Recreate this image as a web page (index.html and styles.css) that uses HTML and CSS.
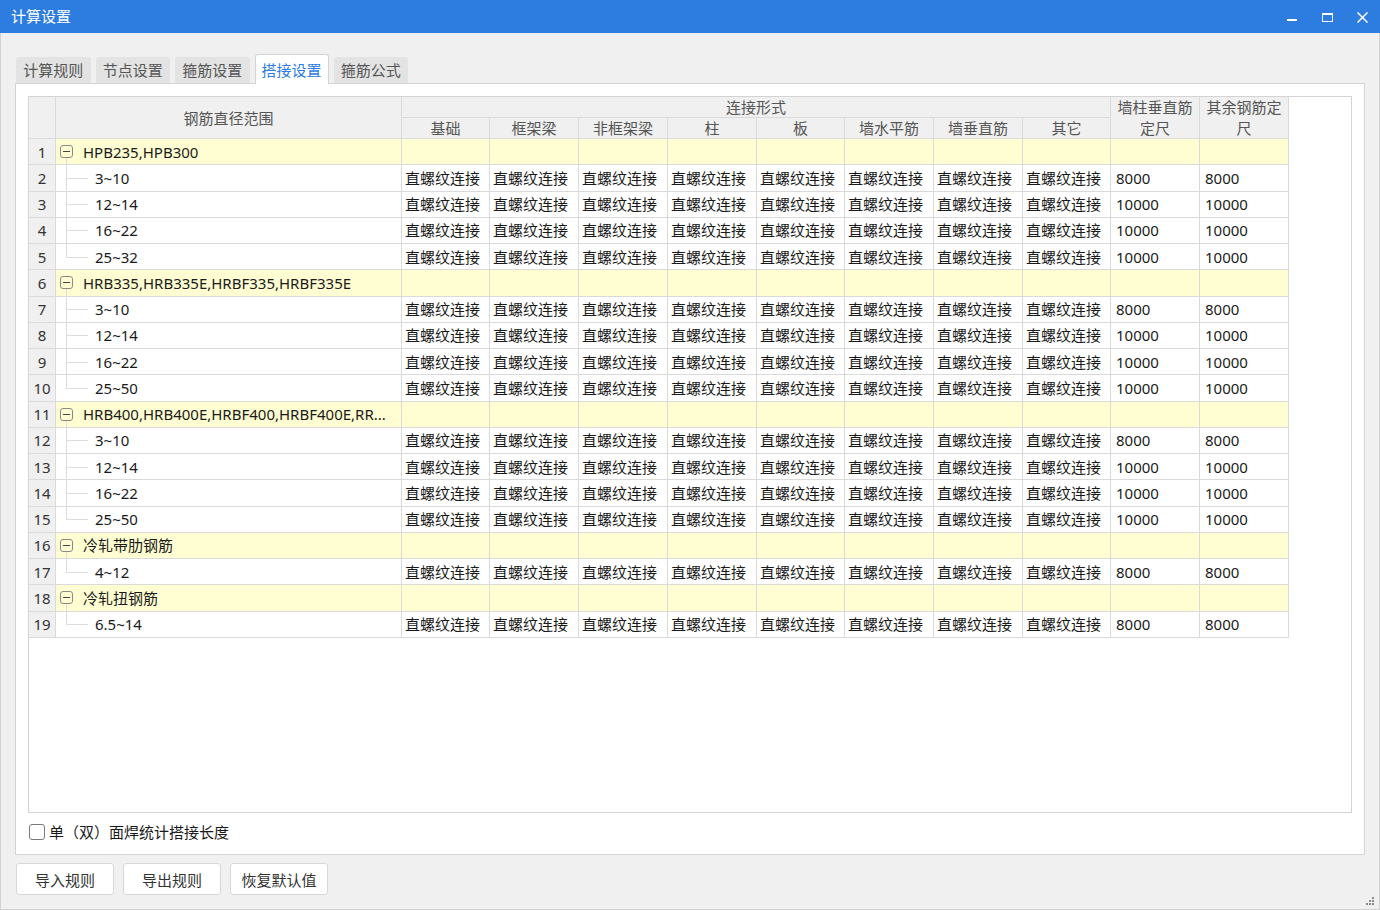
FILE: index.html
```html
<!DOCTYPE html>
<html lang="zh-CN">
<head>
<meta charset="utf-8">
<title>计算设置</title>
<link rel="stylesheet" href="styles.css">
</head>
<body>
<div class="window">
  <div class="titlebar">
    <span class="title">计算设置</span>
    <div class="controls">
      <div class="ctl"><svg width="11" height="11" viewBox="0 0 11 11"><rect x="0" y="7" width="10" height="2" fill="#fff"/></svg></div>
      <div class="ctl"><svg width="11" height="11" viewBox="0 0 11 11"><rect x="0.5" y="1.5" width="10" height="8" fill="none" stroke="#fff" stroke-width="1"/><rect x="0" y="1" width="11" height="2" fill="#fff"/></svg></div>
      <div class="ctl"><svg width="11" height="11" viewBox="0 0 11 11"><path d="M0.5 0.5 L10.5 10.5 M10.5 0.5 L0.5 10.5" stroke="#fff" stroke-width="1.5"/></svg></div>
    </div>
  </div>
  <div class="main">
    <div class="tabs">
      <div class="tab">计算规则</div>
      <div class="tab">节点设置</div>
      <div class="tab">箍筋设置</div>
      <div class="tab active">搭接设置</div>
      <div class="tab">箍筋公式</div>
    </div>
    <div class="panel">
      <div class="gridbox">
        <div class="grid">
          <div class="h hn"></div>
          <div class="h ht">钢筋直径范围</div>
          <div class="h hg">连接形式</div>
          <div class="h hw">墙柱垂直筋定尺</div>
          <div class="h hw">其余钢筋定尺</div>
          <div class="h">基础</div>
          <div class="h">框架梁</div>
          <div class="h">非框架梁</div>
          <div class="h">柱</div>
          <div class="h">板</div>
          <div class="h">墙水平筋</div>
          <div class="h">墙垂直筋</div>
          <div class="h">其它</div>

          <div class="n">1</div><div class="t gp"><span class="box"></span>HPB235,HPB300</div><div class="c y"></div><div class="c y"></div><div class="c y"></div><div class="c y"></div><div class="c y"></div><div class="c y"></div><div class="c y"></div><div class="c y"></div><div class="c y"></div><div class="c y"></div>
          <div class="n">2</div><div class="t ch">3~10</div><div class="c">直螺纹连接</div><div class="c">直螺纹连接</div><div class="c">直螺纹连接</div><div class="c">直螺纹连接</div><div class="c">直螺纹连接</div><div class="c">直螺纹连接</div><div class="c">直螺纹连接</div><div class="c">直螺纹连接</div><div class="c v">8000</div><div class="c v">8000</div>
          <div class="n">3</div><div class="t ch">12~14</div><div class="c">直螺纹连接</div><div class="c">直螺纹连接</div><div class="c">直螺纹连接</div><div class="c">直螺纹连接</div><div class="c">直螺纹连接</div><div class="c">直螺纹连接</div><div class="c">直螺纹连接</div><div class="c">直螺纹连接</div><div class="c v">10000</div><div class="c v">10000</div>
          <div class="n">4</div><div class="t ch">16~22</div><div class="c">直螺纹连接</div><div class="c">直螺纹连接</div><div class="c">直螺纹连接</div><div class="c">直螺纹连接</div><div class="c">直螺纹连接</div><div class="c">直螺纹连接</div><div class="c">直螺纹连接</div><div class="c">直螺纹连接</div><div class="c v">10000</div><div class="c v">10000</div>
          <div class="n">5</div><div class="t ch last">25~32</div><div class="c">直螺纹连接</div><div class="c">直螺纹连接</div><div class="c">直螺纹连接</div><div class="c">直螺纹连接</div><div class="c">直螺纹连接</div><div class="c">直螺纹连接</div><div class="c">直螺纹连接</div><div class="c">直螺纹连接</div><div class="c v">10000</div><div class="c v">10000</div>

          <div class="n">6</div><div class="t gp"><span class="box"></span>HRB335,HRB335E,HRBF335,HRBF335E</div><div class="c y"></div><div class="c y"></div><div class="c y"></div><div class="c y"></div><div class="c y"></div><div class="c y"></div><div class="c y"></div><div class="c y"></div><div class="c y"></div><div class="c y"></div>
          <div class="n">7</div><div class="t ch">3~10</div><div class="c">直螺纹连接</div><div class="c">直螺纹连接</div><div class="c">直螺纹连接</div><div class="c">直螺纹连接</div><div class="c">直螺纹连接</div><div class="c">直螺纹连接</div><div class="c">直螺纹连接</div><div class="c">直螺纹连接</div><div class="c v">8000</div><div class="c v">8000</div>
          <div class="n">8</div><div class="t ch">12~14</div><div class="c">直螺纹连接</div><div class="c">直螺纹连接</div><div class="c">直螺纹连接</div><div class="c">直螺纹连接</div><div class="c">直螺纹连接</div><div class="c">直螺纹连接</div><div class="c">直螺纹连接</div><div class="c">直螺纹连接</div><div class="c v">10000</div><div class="c v">10000</div>
          <div class="n">9</div><div class="t ch">16~22</div><div class="c">直螺纹连接</div><div class="c">直螺纹连接</div><div class="c">直螺纹连接</div><div class="c">直螺纹连接</div><div class="c">直螺纹连接</div><div class="c">直螺纹连接</div><div class="c">直螺纹连接</div><div class="c">直螺纹连接</div><div class="c v">10000</div><div class="c v">10000</div>
          <div class="n">10</div><div class="t ch last">25~50</div><div class="c">直螺纹连接</div><div class="c">直螺纹连接</div><div class="c">直螺纹连接</div><div class="c">直螺纹连接</div><div class="c">直螺纹连接</div><div class="c">直螺纹连接</div><div class="c">直螺纹连接</div><div class="c">直螺纹连接</div><div class="c v">10000</div><div class="c v">10000</div>

          <div class="n">11</div><div class="t gp"><span class="box"></span>HRB400,HRB400E,HRBF400,HRBF400E,RR...</div><div class="c y"></div><div class="c y"></div><div class="c y"></div><div class="c y"></div><div class="c y"></div><div class="c y"></div><div class="c y"></div><div class="c y"></div><div class="c y"></div><div class="c y"></div>
          <div class="n">12</div><div class="t ch">3~10</div><div class="c">直螺纹连接</div><div class="c">直螺纹连接</div><div class="c">直螺纹连接</div><div class="c">直螺纹连接</div><div class="c">直螺纹连接</div><div class="c">直螺纹连接</div><div class="c">直螺纹连接</div><div class="c">直螺纹连接</div><div class="c v">8000</div><div class="c v">8000</div>
          <div class="n">13</div><div class="t ch">12~14</div><div class="c">直螺纹连接</div><div class="c">直螺纹连接</div><div class="c">直螺纹连接</div><div class="c">直螺纹连接</div><div class="c">直螺纹连接</div><div class="c">直螺纹连接</div><div class="c">直螺纹连接</div><div class="c">直螺纹连接</div><div class="c v">10000</div><div class="c v">10000</div>
          <div class="n">14</div><div class="t ch">16~22</div><div class="c">直螺纹连接</div><div class="c">直螺纹连接</div><div class="c">直螺纹连接</div><div class="c">直螺纹连接</div><div class="c">直螺纹连接</div><div class="c">直螺纹连接</div><div class="c">直螺纹连接</div><div class="c">直螺纹连接</div><div class="c v">10000</div><div class="c v">10000</div>
          <div class="n">15</div><div class="t ch last">25~50</div><div class="c">直螺纹连接</div><div class="c">直螺纹连接</div><div class="c">直螺纹连接</div><div class="c">直螺纹连接</div><div class="c">直螺纹连接</div><div class="c">直螺纹连接</div><div class="c">直螺纹连接</div><div class="c">直螺纹连接</div><div class="c v">10000</div><div class="c v">10000</div>

          <div class="n">16</div><div class="t gp"><span class="box"></span>冷轧带肋钢筋</div><div class="c y"></div><div class="c y"></div><div class="c y"></div><div class="c y"></div><div class="c y"></div><div class="c y"></div><div class="c y"></div><div class="c y"></div><div class="c y"></div><div class="c y"></div>
          <div class="n">17</div><div class="t ch last">4~12</div><div class="c">直螺纹连接</div><div class="c">直螺纹连接</div><div class="c">直螺纹连接</div><div class="c">直螺纹连接</div><div class="c">直螺纹连接</div><div class="c">直螺纹连接</div><div class="c">直螺纹连接</div><div class="c">直螺纹连接</div><div class="c v">8000</div><div class="c v">8000</div>

          <div class="n">18</div><div class="t gp"><span class="box"></span>冷轧扭钢筋</div><div class="c y"></div><div class="c y"></div><div class="c y"></div><div class="c y"></div><div class="c y"></div><div class="c y"></div><div class="c y"></div><div class="c y"></div><div class="c y"></div><div class="c y"></div>
          <div class="n">19</div><div class="t ch last">6.5~14</div><div class="c">直螺纹连接</div><div class="c">直螺纹连接</div><div class="c">直螺纹连接</div><div class="c">直螺纹连接</div><div class="c">直螺纹连接</div><div class="c">直螺纹连接</div><div class="c">直螺纹连接</div><div class="c">直螺纹连接</div><div class="c v">8000</div><div class="c v">8000</div>
        </div>
      </div>
      <label class="checkrow"><span class="checkbox"></span>单（双）面焊统计搭接长度</label>
    </div>
    <div class="footer">
      <button class="btn">导入规则</button>
      <button class="btn">导出规则</button>
      <button class="btn">恢复默认值</button>
      <svg class="grip" width="8" height="8" viewBox="0 0 8 8"><g fill="#8a8a8a"><rect x="6" y="0" width="2" height="2"/><rect x="3" y="3" width="2" height="2"/><rect x="6" y="3" width="2" height="2"/><rect x="0" y="6" width="2" height="2"/><rect x="3" y="6" width="2" height="2"/><rect x="6" y="6" width="2" height="2"/></g></svg>
    </div>
  </div>
</div>
</body>
</html>
```

FILE: styles.css
```css
html, body {
  margin: 0;
  padding: 0;
}
body {
  font-family: "Noto Sans", "Noto Sans CJK SC", sans-serif;
  font-size: 15px;
  color: #1a1a1a;
  background: #f0f0f0;
}
.window {
  width: 1380px;
  height: 910px;
  display: flex;
  flex-direction: column;
  overflow: hidden;
}
.titlebar {
  flex: none;
  height: 33px;
  background: #2c7ddf;
  color: #fff;
  display: flex;
  align-items: center;
  padding-left: 11px;
}
.title {
  font-size: 15px;
  line-height: 33px;
}
.controls {
  margin-left: auto;
  display: flex;
  height: 33px;
}
.ctl {
  width: 35px;
  height: 33px;
  display: flex;
  align-items: center;
  justify-content: center;
  padding-top: 1px;
  box-sizing: border-box;
}
.main {
  flex: 1;
  display: flex;
  flex-direction: column;
  border: 1px solid #d2d2d2;
  border-top: none;
  padding: 0 14px;
  min-height: 0;
}
.tabs {
  margin-top: 21px;
  height: 29px;
  display: flex;
  align-items: flex-end;
  gap: 5px;
  padding-left: 1px;
  position: relative;
  z-index: 1;
  flex: none;
}
.tab {
  height: 26px;
  line-height: 26px;
  padding: 0 7.25px;
  background: #e3e3e3;
  color: #555;
  border-radius: 3px 3px 0 0;
  box-sizing: border-box;
  white-space: nowrap;
}
.tab.active {
  height: 30px;
  line-height: 30px;
  padding: 0 6px;
  background: #fff;
  border: 1px solid #d3d3d3;
  border-bottom: none;
  color: #2c7ddf;
  margin-bottom: -1px;
}
.panel {
  flex: none;
  height: 772px;
  box-sizing: border-box;
  background: #fff;
  border: 1px solid #d3d3d3;
  padding: 12px 12px 0;
  display: flex;
  flex-direction: column;
}
.gridbox {
  flex: none;
  height: 717px;
  box-sizing: border-box;
  border: 1px solid #d3d3d3;
  background: #fff;
  overflow: hidden;
}
.grid {
  display: grid;
  grid-template-columns: 27px 346px 88px 89px 89px 89px 88px 89px 89px 88px 89px 89px;
  grid-template-rows: 21px 21px;
  grid-auto-rows: 26.25px;
  width: max-content;
}
.grid > div {
  box-sizing: border-box;
  border-right: 1px solid #dadada;
  border-bottom: 1px solid #dadada;
  display: flex;
  align-items: center;
  white-space: nowrap;
  overflow: hidden;
  line-height: 20px;
}
.grid > .h {
  background: #f0f0f0;
  color: #555;
  justify-content: center;
  text-align: center;
}
.grid > .hn,
.grid > .ht {
  grid-row: span 2;
}
.grid > .hg {
  grid-column: span 8;
}
.grid > .hw {
  grid-row: span 2;
  white-space: normal;
  padding: 0 4px;
  line-height: 21px;
}
.grid > .n {
  background: #f0f0f0;
  justify-content: center;
  color: #333;
}
.grid > .c {
  padding-left: 3px;
}
.grid > .c.v {
  padding-left: 5px;
}
.grid > .y,
.grid > .gp {
  background: #fffed2;
}
.grid > .t {
  position: relative;
  overflow: visible;
}
.grid > .gp {
  padding-left: 4px;
}
.grid > .ch {
  padding-left: 39px;
}
.box {
  width: 13px;
  height: 13px;
  box-sizing: border-box;
  border: 1px solid #8a8a8a;
  border-radius: 3px;
  background: linear-gradient(#444, #444) center / 7px 1px no-repeat;
  margin-right: 10px;
  flex: none;
}
.gp::before {
  content: "";
  position: absolute;
  left: 10px;
  top: 19px;
  bottom: -1px;
  width: 1px;
  background: #dcdcdc;
}
.ch::before {
  content: "";
  position: absolute;
  left: 10px;
  top: -1px;
  bottom: -1px;
  width: 1px;
  background: #dcdcdc;
}
.ch.last::before {
  bottom: 50%;
}
.ch::after {
  content: "";
  position: absolute;
  left: 10px;
  top: 50%;
  width: 22px;
  height: 1px;
  background: #dcdcdc;
}
.checkrow {
  display: flex;
  align-items: center;
  padding-top: 11px;
  gap: 4px;
  line-height: 16px;
  color: #1a1a1a;
}
.checkbox {
  width: 16px;
  height: 16px;
  box-sizing: border-box;
  border: 1px solid #7a7a7a;
  border-radius: 3px;
  margin-left: 1px;
  background: #fff;
}
.footer {
  flex: 1;
  display: flex;
  align-items: flex-start;
  gap: 9px;
  padding-top: 8px;
  padding-left: 1px;
}
.btn {
  width: 98px;
  height: 32px;
  background: #fff;
  border: 1px solid #d8d8d8;
  border-radius: 3px;
  font: inherit;
  color: #333;
  padding: 0;
}
.grip {
  margin-left: auto;
  align-self: flex-end;
  margin-bottom: 4px;
  margin-right: -9px;
}
```
